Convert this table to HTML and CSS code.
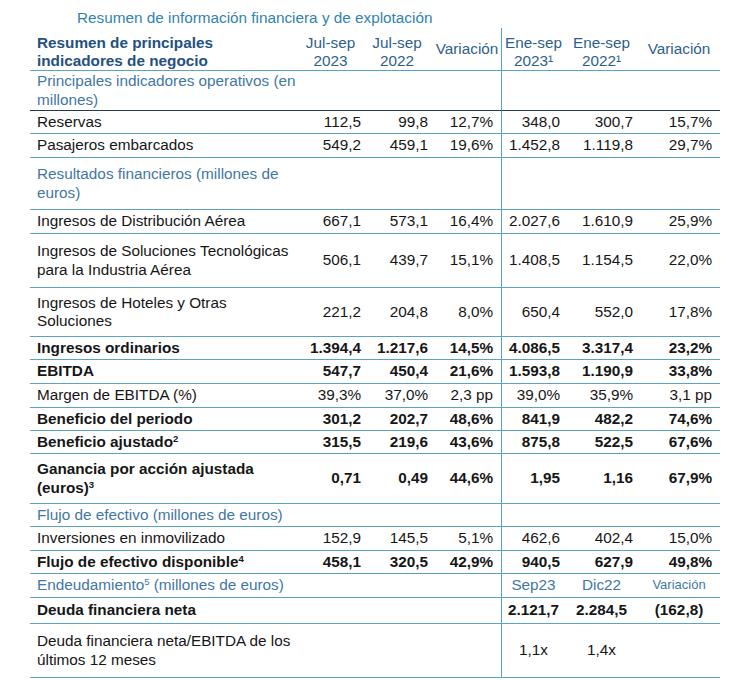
FILE: index.html
```html
<!DOCTYPE html>
<html lang="es">
<head>
<meta charset="utf-8">
<title>Resumen de información financiera y de explotación</title>
<link rel="stylesheet" href="styles.css">
</head>
<body>
<div class="title">Resumen de información financiera y de explotación</div>
<table class="kpi">
  <colgroup>
    <col class="c-label"><col class="c-n1"><col class="c-n2"><col class="c-n3"><col class="c-n4"><col class="c-n5"><col class="c-n6">
  </colgroup>
  <tr class="head h43">
    <th class="lbl">Resumen de principales<br>indicadores de negocio</th>
    <th>Jul-sep<br>2023</th>
    <th>Jul-sep<br>2022</th>
    <th class="mid">Variación</th>
    <th class="split">Ene-sep<br>2023¹</th>
    <th>Ene-sep<br>2022¹</th>
    <th class="mid">Variación</th>
  </tr>
  <tr class="section h40 dark">
    <td class="lbl">Principales indicadores operativos (en millones)</td>
    <td></td><td></td><td></td><td class="split"></td><td></td><td></td>
  </tr>
  <tr class="h23">
    <td class="lbl">Reservas</td>
    <td>112,5</td><td>99,8</td><td>12,7%</td><td class="split">348,0</td><td>300,7</td><td>15,7%</td>
  </tr>
  <tr class="h24">
    <td class="lbl">Pasajeros embarcados</td>
    <td>549,2</td><td>459,1</td><td>19,6%</td><td class="split">1.452,8</td><td>1.119,8</td><td>29,7%</td>
  </tr>
  <tr class="section h52">
    <td class="lbl">Resultados financieros (millones de euros)</td>
    <td></td><td></td><td></td><td class="split"></td><td></td><td></td>
  </tr>
  <tr class="h24">
    <td class="lbl">Ingresos de Distribución Aérea</td>
    <td>667,1</td><td>573,1</td><td>16,4%</td><td class="split">2.027,6</td><td>1.610,9</td><td>25,9%</td>
  </tr>
  <tr class="h54">
    <td class="lbl">Ingresos de Soluciones Tecnológicas para la Industria Aérea</td>
    <td>506,1</td><td>439,7</td><td>15,1%</td><td class="split">1.408,5</td><td>1.154,5</td><td>22,0%</td>
  </tr>
  <tr class="h49">
    <td class="lbl">Ingresos de Hoteles y Otras Soluciones</td>
    <td>221,2</td><td>204,8</td><td>8,0%</td><td class="split">650,4</td><td>552,0</td><td>17,8%</td>
  </tr>
  <tr class="h23 bold">
    <td class="lbl">Ingresos ordinarios</td>
    <td>1.394,4</td><td>1.217,6</td><td>14,5%</td><td class="split">4.086,5</td><td>3.317,4</td><td>23,2%</td>
  </tr>
  <tr class="h24 bold">
    <td class="lbl">EBITDA</td>
    <td>547,7</td><td>450,4</td><td>21,6%</td><td class="split">1.593,8</td><td>1.190,9</td><td>33,8%</td>
  </tr>
  <tr class="h24">
    <td class="lbl">Margen de EBITDA (%)</td>
    <td>39,3%</td><td>37,0%</td><td>2,3 pp</td><td class="split">39,0%</td><td>35,9%</td><td>3,1 pp</td>
  </tr>
  <tr class="h23 bold">
    <td class="lbl">Beneficio del periodo</td>
    <td>301,2</td><td>202,7</td><td>48,6%</td><td class="split">841,9</td><td>482,2</td><td>74,6%</td>
  </tr>
  <tr class="h23 bold">
    <td class="lbl">Beneficio ajustado<sup>2</sup></td>
    <td>315,5</td><td>219,6</td><td>43,6%</td><td class="split">875,8</td><td>522,5</td><td>67,6%</td>
  </tr>
  <tr class="h50 bold">
    <td class="lbl">Ganancia por acción ajustada<br>(euros)<sup>3</sup></td>
    <td>0,71</td><td>0,49</td><td>44,6%</td><td class="split">1,95</td><td>1,16</td><td>67,9%</td>
  </tr>
  <tr class="section h23">
    <td class="lbl">Flujo de efectivo (millones de euros)</td>
    <td></td><td></td><td></td><td class="split"></td><td></td><td></td>
  </tr>
  <tr class="h24">
    <td class="lbl">Inversiones en inmovilizado</td>
    <td>152,9</td><td>145,5</td><td>5,1%</td><td class="split">462,6</td><td>402,4</td><td>15,0%</td>
  </tr>
  <tr class="h23 bold">
    <td class="lbl">Flujo de efectivo disponible<sup>4</sup></td>
    <td>458,1</td><td>320,5</td><td>42,9%</td><td class="split">940,5</td><td>627,9</td><td>49,8%</td>
  </tr>
  <tr class="section h24 sub">
    <td class="lbl">Endeudamiento<sup>5</sup> (millones de euros)</td>
    <td></td><td></td><td></td><td class="split ctr">Sep23</td><td class="ctr">Dic22</td><td class="ctr small">Variación</td>
  </tr>
  <tr class="h26 bold">
    <td class="lbl">Deuda financiera neta</td>
    <td></td><td></td><td></td><td class="split ctr">2.121,7</td><td class="ctr">2.284,5</td><td class="ctr">(162,8)</td>
  </tr>
  <tr class="h54">
    <td class="lbl">Deuda financiera neta/EBITDA de los últimos 12 meses</td>
    <td></td><td></td><td></td><td class="split ctr">1,1x</td><td class="ctr">1,4x</td><td></td>
  </tr>
</table>
</body>
</html>
```
FILE: styles.css
```css
html, body {
  margin: 0;
  padding: 0;
  background: #ffffff;
}
body {
  font-family: "Liberation Sans", Arial, sans-serif;
  font-size: 15.3px;
  color: #161616;
}
.title {
  height: 28px;
  box-sizing: border-box;
  padding: 9px 0 0 77px;
  line-height: 17px;
  font-size: 15.3px;
  color: #3283ad;
}
.kpi {
  margin-left: 30px;
  width: 690px;
  table-layout: fixed;
  border-collapse: separate;
  border-spacing: 0;
}
.c-label { width: 270px; }
.c-n1 { width: 66px; }
.c-n2 { width: 67px; }
.c-n3 { width: 68px; }
.c-n4 { width: 64px; }
.c-n5 { width: 73px; }
.c-n6 { width: 82px; }

.kpi th, .kpi td {
  padding: 0;
  border-bottom: 1px solid #5aa3c2;
  vertical-align: middle;
  line-height: 18.5px;
  text-align: right;
  white-space: nowrap;
}
.kpi td:nth-child(2), .kpi th:nth-child(2) { padding-right: 5px; }
.kpi td:nth-child(3), .kpi th:nth-child(3) { padding-right: 5px; }
.kpi td:nth-child(4) { padding-right: 8px; }
.kpi td:nth-child(5) { padding-right: 5px; }
.kpi td:nth-child(6) { padding-right: 5px; }
.kpi td:nth-child(7) { padding-right: 8px; }

.kpi .lbl {
  text-align: left;
  padding-left: 7px;
  padding-right: 4px;
  white-space: normal;
}
.kpi .split { border-left: 1px solid #5aa3c2; }

.head th {
  font-weight: normal;
  color: #2e5f8c;
  text-align: center;
  vertical-align: bottom;
  line-height: 18px;
  padding: 0;
}
.head th.mid { vertical-align: middle; }
.head th.lbl {
  font-weight: bold;
  color: #24507f;
  text-align: left;
  padding-left: 7px;
}

.section .lbl { color: #3f77a5; }
.dark td { border-bottom-color: #243a52; }
.dark td.split { border-left-color: #5aa3c2; }

.bold td { font-weight: bold; }
.kpi td.ctr { text-align: center; padding-right: 0; }
.sub td.ctr { color: #3f77a5; }
.sub td.small { font-size: 13px; }

sup {
  font-size: 9.5px;
  line-height: 0;
  vertical-align: 5px;
}

.h23 { height: 23px; }
.h24 { height: 24px; }
.h26 { height: 26px; }
.h40 { height: 40px; }
.h43 { height: 43px; }
.h49 { height: 49px; }
.h50 { height: 50px; }
.h52 { height: 52px; }
.h54 { height: 54px; }
```
